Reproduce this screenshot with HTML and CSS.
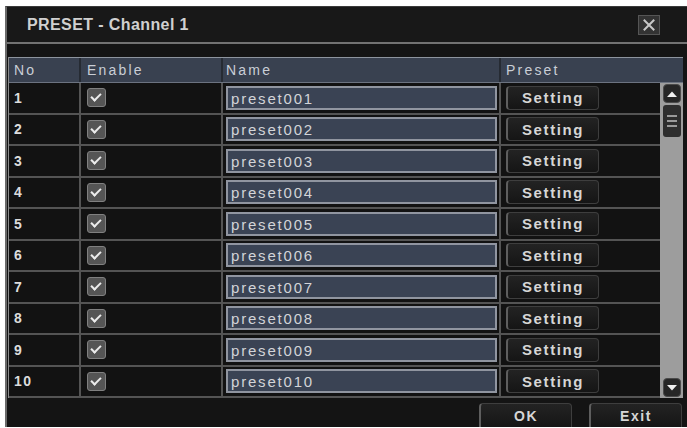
FILE: index.html
```html
<!DOCTYPE html>
<html>
<head>
<meta charset="utf-8">
<link rel="stylesheet" href="styles.css">
</head>
<body>
<div class="dialog">
  <div class="titlebar">
    <span class="title">PRESET - Channel 1</span>
    <span class="close"><svg width="14" height="14" viewBox="0 0 14 14"><path d="M2.5 2.5 L11.5 11.5 M11.5 2.5 L2.5 11.5" stroke="#c8c8c8" stroke-width="2" stroke-linecap="square"/></svg></span>
  </div>
  <div class="rule"></div>
  <div class="table">
    <div class="thead">
      <div class="c c-no">No</div>
      <div class="c c-en">Enable</div>
      <div class="c c-name">Name</div>
      <div class="c c-pre">Preset</div>
    </div>
    <div class="tbody">
      <div class="rows">
        <div class="row"><div class="c c-no num">1</div><div class="c c-en"><span class="cb"></span></div><div class="c c-name"><span class="inp">preset001</span></div><div class="c c-pre"><span class="btn">Setting</span></div></div>
        <div class="row"><div class="c c-no num">2</div><div class="c c-en"><span class="cb"></span></div><div class="c c-name"><span class="inp">preset002</span></div><div class="c c-pre"><span class="btn">Setting</span></div></div>
        <div class="row"><div class="c c-no num">3</div><div class="c c-en"><span class="cb"></span></div><div class="c c-name"><span class="inp">preset003</span></div><div class="c c-pre"><span class="btn">Setting</span></div></div>
        <div class="row"><div class="c c-no num">4</div><div class="c c-en"><span class="cb"></span></div><div class="c c-name"><span class="inp">preset004</span></div><div class="c c-pre"><span class="btn">Setting</span></div></div>
        <div class="row"><div class="c c-no num">5</div><div class="c c-en"><span class="cb"></span></div><div class="c c-name"><span class="inp">preset005</span></div><div class="c c-pre"><span class="btn">Setting</span></div></div>
        <div class="row"><div class="c c-no num">6</div><div class="c c-en"><span class="cb"></span></div><div class="c c-name"><span class="inp">preset006</span></div><div class="c c-pre"><span class="btn">Setting</span></div></div>
        <div class="row"><div class="c c-no num">7</div><div class="c c-en"><span class="cb"></span></div><div class="c c-name"><span class="inp">preset007</span></div><div class="c c-pre"><span class="btn">Setting</span></div></div>
        <div class="row"><div class="c c-no num">8</div><div class="c c-en"><span class="cb"></span></div><div class="c c-name"><span class="inp">preset008</span></div><div class="c c-pre"><span class="btn">Setting</span></div></div>
        <div class="row"><div class="c c-no num">9</div><div class="c c-en"><span class="cb"></span></div><div class="c c-name"><span class="inp">preset009</span></div><div class="c c-pre"><span class="btn">Setting</span></div></div>
        <div class="row"><div class="c c-no num">10</div><div class="c c-en"><span class="cb"></span></div><div class="c c-name"><span class="inp">preset010</span></div><div class="c c-pre"><span class="btn">Setting</span></div></div>
      </div>
      <div class="scrollbar">
        <span class="sbtn"><svg width="12" height="8" viewBox="0 0 12 8"><path d="M1 7 L6 1.5 L11 7 Z" fill="#f0f0f0"/></svg></span>
        <span class="thumb"><i></i><i></i><i></i></span>
        <span class="track"></span>
        <span class="sbtn"><svg width="12" height="8" viewBox="0 0 12 8"><path d="M1 1 L6 6.5 L11 1 Z" fill="#f0f0f0"/></svg></span>
      </div>
    </div>
  </div>
  <div class="footer">
    <span class="btn fbtn">OK</span>
    <span class="btn fbtn">Exit</span>
  </div>
</div>
</body>
</html>
```

FILE: styles.css
```css
* { box-sizing: border-box; }
html, body { margin: 0; padding: 0; background: #ffffff; }
body { font-family: "Liberation Sans", Arial, sans-serif; }

.dialog {
  margin: 6px 0 0 5px;
  width: 682px;
  height: 421px;
  background: #141414;
  border-left: 2px solid #6a6a6a;
  border-top: 1px solid #3a3a3a;
  display: flex;
  flex-direction: column;
  overflow: hidden;
}

.titlebar {
  height: 35px;
  flex: none;
  display: flex;
  align-items: center;
  justify-content: space-between;
  padding: 0 27px 0 20px;
  background: #181818;
}
.title {
  color: #d0d0d0;
  font-weight: bold;
  font-size: 16px;
  letter-spacing: 0.4px;
}
.close {
  width: 22px;
  height: 20px;
  display: flex;
  align-items: center;
  justify-content: center;
  background: #333333;
  border: 1px solid #555555;
}

.rule {
  height: 2px;
  flex: none;
  background: #727272;
  margin-bottom: 13px;
}

.table {
  margin-left: 1px;
  width: 675px;
  border-left: 1px solid #8a8a8a;
  flex: none;
}

.thead {
  height: 26px;
  display: grid;
  grid-template-columns: 72px 142px 278px 1fr;
  background: #394150;
  border-top: 1px solid #8d949e;
  border-bottom: 1px solid #6c7380;
}
.thead .c {
  color: #c9ced6;
  font-size: 14px;
  letter-spacing: 2.2px;
  border-right: 2px solid #262b33;
}
.thead .c:last-child { border-right: none; }

.c {
  display: flex;
  align-items: center;
}
.c-no { padding-left: 5px; }
.c-en { padding-left: 6px; }
.c-name { padding-left: 3px; }
.c-pre { padding-left: 5px; }

.tbody {
  display: flex;
}
.rows {
  flex: 1;
}
.row {
  height: 31.5px;
  display: grid;
  grid-template-columns: 72px 142px 278px 1fr;
  border-bottom: 2px solid #545454;
  background: #121212;
}
.row .c { border-right: 2px solid #545454; }
.row .c:last-child { border-right: none; }

.num {
  color: #dcdcdc;
  font-size: 14px;
  font-weight: bold;
  letter-spacing: 1.5px;
}

.cb {
  width: 19px;
  height: 19px;
  border-radius: 3px;
  background: #555555;
  border: 1px solid #808080;
  position: relative;
}
.cb::after {
  content: "";
  position: absolute;
  left: 5px;
  top: 2px;
  width: 4px;
  height: 8px;
  border-right: 2.5px solid #ececec;
  border-bottom: 2.5px solid #ececec;
  transform: rotate(45deg);
}

.inp {
  width: 271px;
  height: 24px;
  background: #3a4354;
  border: 2px solid #9095a0;
  color: #d2d4d8;
  font-size: 15px;
  letter-spacing: 1.8px;
  padding: 2px 0 0 3px;
  line-height: 18px;
}

.btn {
  width: 93px;
  height: 24px;
  display: flex;
  align-items: center;
  justify-content: center;
  background: linear-gradient(#232323, #151515);
  border: 1px solid #3e3e3e;
  border-left: 2px solid #5e5e5e;
  border-radius: 4px;
  color: #d6d6d6;
  font-size: 15px;
  font-weight: bold;
  letter-spacing: 1.6px;
}

.scrollbar {
  width: 23px;
  flex: none;
  background: #9d9d9d;
  display: flex;
  flex-direction: column;
  align-items: center;
  padding: 0 1px 0 1px;
}
.sbtn {
  width: 18px;
  height: 19px;
  background: #262626;
  border-radius: 4px;
  border: 1px solid #4a4a4a;
  display: flex;
  align-items: center;
  justify-content: center;
  flex: none;
  margin-top: 1px;
}
.sbtn:last-child { margin-top: 0; margin-bottom: 1px; }
.thumb {
  width: 18px;
  height: 32px;
  margin-top: 2px;
  background: #2e2e2e;
  border-radius: 3px;
  display: flex;
  flex-direction: column;
  align-items: center;
  justify-content: center;
  gap: 3px;
  flex: none;
}
.thumb i {
  display: block;
  width: 10px;
  height: 2px;
  background: #9a9a9a;
}
.track { flex: 1; }

.footer {
  flex: 1;
  display: flex;
  justify-content: flex-end;
  gap: 17px;
  padding: 5px 5px 0 0;
}
.fbtn {
  height: 26px;
  border-radius: 4px 4px 0 0;
  font-size: 14px;
}
```
